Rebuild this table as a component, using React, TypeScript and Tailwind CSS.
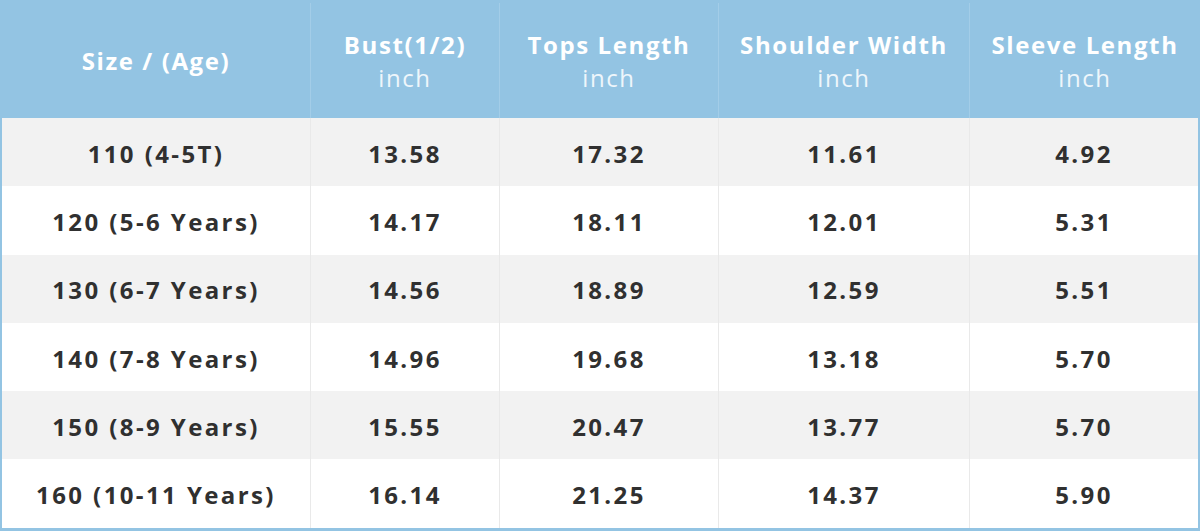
const columns = [
  { title: 'Size / (Age)', unit: '', width: 'w-[310px]' },
  { title: 'Bust(1/2)', unit: 'inch', width: 'w-[189px]' },
  { title: 'Tops Length', unit: 'inch', width: 'w-[219px]' },
  { title: 'Shoulder Width', unit: 'inch', width: 'w-[251px]' },
  { title: 'Sleeve Length', unit: 'inch', width: 'flex-1' },
];

const rows = [
  ['110 (4-5T)', '13.58', '17.32', '11.61', '4.92'],
  ['120 (5-6 Years)', '14.17', '18.11', '12.01', '5.31'],
  ['130 (6-7 Years)', '14.56', '18.89', '12.59', '5.51'],
  ['140 (7-8 Years)', '14.96', '19.68', '13.18', '5.70'],
  ['150 (8-9 Years)', '15.55', '20.47', '13.77', '5.70'],
  ['160 (10-11 Years)', '16.14', '21.25', '14.37', '5.90'],
];

export default function App() {
  return (
    <div
      className="w-[1200px] h-[531px] bg-[#93c4e3] px-[2px] pb-[3px] flex flex-col"
      style={{ fontFamily: '"Open Sans", "Noto Sans", sans-serif' }}
    >
      {/* header */}
      <div className="flex h-[118px] shrink-0 -mx-[2px] pt-[3px]">
        {columns.map((col, i) => (
          <div
            key={col.title}
            className={`${col.width} flex flex-col items-center justify-center text-white text-[24px] leading-[33px] tracking-[1.6px] ${
              i > 0 ? 'border-l border-[#a3cde8]' : ''
            } ${i === 0 ? 'pl-[2px]' : ''}`}
          >
            <span className="font-bold">{col.title}</span>
            {col.unit && <span className="font-normal text-[#eef6fb]">{col.unit}</span>}
          </div>
        ))}
      </div>

      {/* body */}
      <div className="flex-1 flex flex-col">
        {rows.map((row, r) => (
          <div
            key={row[0]}
            className={`flex h-[68.3px] ${r % 2 === 0 ? 'bg-[#f2f2f2]' : 'bg-white'}`}
          >
            {row.map((cell, i) => (
              <div
                key={i}
                className={`${
                  i === 0 ? 'w-[308px]' : columns[i].width
                } flex items-center justify-center pt-[3px] text-[24px] font-bold text-[#303030] tracking-[2.4px] ${
                  i > 0 ? 'border-l border-[#e9e9e9]' : ''
                }`}
              >
                {cell}
              </div>
            ))}
          </div>
        ))}
      </div>
    </div>
  );
}
